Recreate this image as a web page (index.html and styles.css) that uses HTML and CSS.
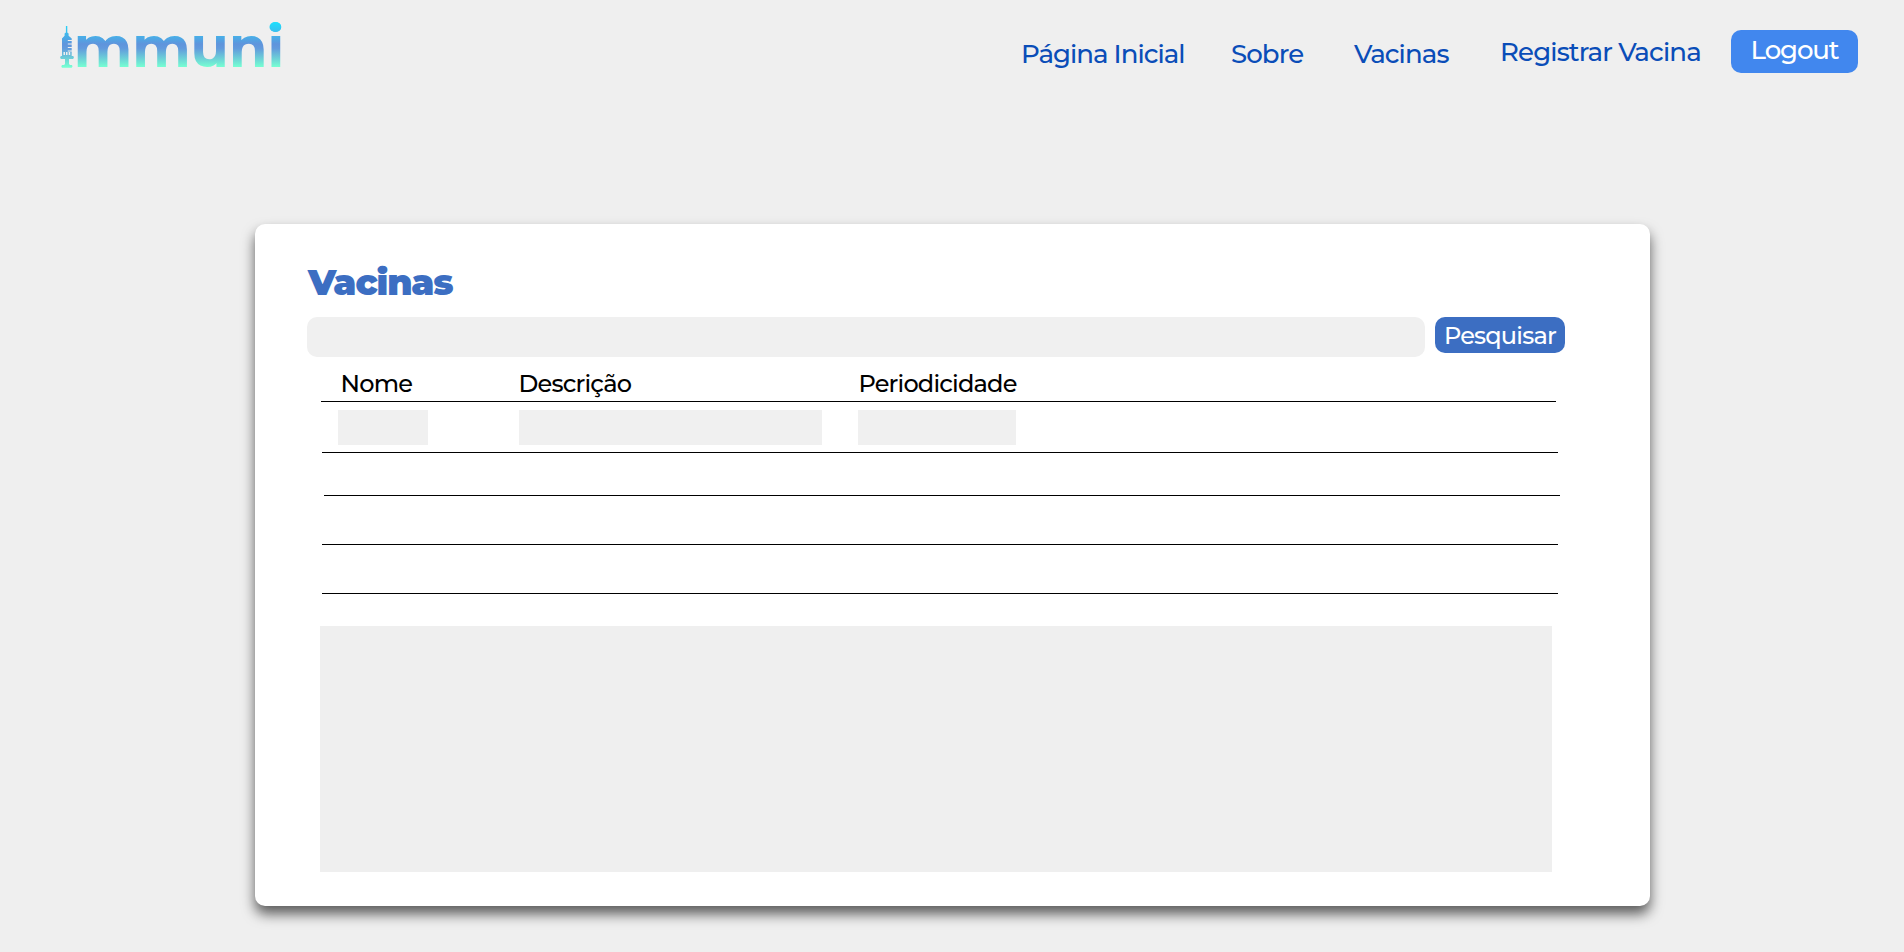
FILE: index.html
```html
<!DOCTYPE html>
<html lang="pt-BR">
<head>
<meta charset="utf-8">
<title>Immuni - Vacinas</title>
<link rel="stylesheet" href="styles.css">
</head>
<body>
<header class="topbar">
  <svg class="logo" viewBox="0 0 230 56" width="230" height="56" role="img" aria-label="Immuni">
    <defs>
      <linearGradient id="brand" gradientUnits="userSpaceOnUse" x1="0" y1="6" x2="0" y2="52">
        <stop offset="0" stop-color="#18e4ff"/>
        <stop offset="0.5" stop-color="#5f94dc"/>
        <stop offset="0.6" stop-color="#629bdd"/>
        <stop offset="1" stop-color="#76ffd2"/>
      </linearGradient>
    </defs>
    <g fill="url(#brand)">
      <path d="M15.900 11H17.300V17.500L18.600 18.500V20.800L21.700 23.500V25H17.800V26H21.700V28.500H17.800V29.500H21.700V32H17.800V33H21.700V35.500H17.800V36.500H21.700V41H23.200L23.800 42V43L23 44H19V49L20 50H22L22.500 51.500L21.700 52.700H12L11.300 51.500L12 50H14L15 49V44H11L10.200 43V42L11 41H12V23.500L14.600 20.800V18.500L15.900 17.500Z"/>
      <text class="logo-text" x="23.700" y="52" textLength="210.500" lengthAdjust="spacingAndGlyphs">mmuni</text>
      <ellipse cx="225.200" cy="12" rx="5.7" ry="5"/>
    </g>
    <path class="logo-window" d="M13.500 37h1.500v3h-1.500zM16 37h1.500v3H16zM18.700 37h1.500v3h-1.500z"/>
  </svg>
  <nav class="nav">
    <a class="nav-home">Página Inicial</a>
    <a class="nav-about">Sobre</a>
    <a class="nav-vaccines">Vacinas</a>
    <a class="nav-register">Registrar Vacina</a>
    <button class="logout"><span>Logout</span></button>
  </nav>
</header>
<main class="card">
  <h1 class="title">Vacinas</h1>
  <form class="search">
    <input class="search-input" type="text" aria-label="Pesquisar">
    <button class="search-button" type="button"><span>Pesquisar</span></button>
  </form>
  <section class="table">
    <div class="row head">
      <span class="c1">Nome</span><span class="c2">Descrição</span><span class="c3">Periodicidade</span>
    </div>
    <div class="row first">
      <i class="box b1"></i><i class="box b2"></i><i class="box b3"></i>
    </div>
    <div class="row second"></div>
    <div class="row third"></div>
    <div class="row third"></div>
  </section>
  <div class="panel"></div>
</main>
</body>
</html>
```
FILE: styles.css
```css
* { box-sizing: border-box; }
body {
  margin: 0;
  height: 952px;
  overflow: hidden;
  background: #efefef;
  font-family: Montserrat, Inter, sans-serif;
  font-weight: 500;
}
.topbar {
  display: flex;
  justify-content: space-between;
  height: 224px;
  padding: 15px 46px 0 50px;
}
.logo { overflow: visible; }
.logo-text { font: 700 57px Montserrat, Inter, sans-serif; }
.logo-window { fill: #efefef; }
.nav {
  display: flex;
  align-items: flex-start;
  padding-top: 15px;
  color: #0a4db8;
  font-size: 26px;
  letter-spacing: -.9px;
  line-height: 30px;
  white-space: nowrap;
}
.nav a { padding-top: 9px; }
.nav .nav-home { width: 210px; letter-spacing: -.97px; }
.nav-about { width: 123px; }
.nav-vaccines { width: 146px; }
.nav .nav-register { width: 231px; padding-top: 7px; letter-spacing: -.84px; }
button {
  border: 0;
  border-radius: 10px;
  color: #fff;
  font-family: inherit;
  font-weight: 500;
  white-space: nowrap;
}
.logout {
  width: 127px;
  height: 43px;
  padding: 0 0 4px;
  background: #4187ee;
  font-size: 26px;
  letter-spacing: -1.1px;
  line-height: 30px;
}
.card {
  width: 1395px;
  height: 682px;
  margin-left: 255px;
  padding: 36px 52px 0;
  border-radius: 10px;
  background: #fff;
  box-shadow: 0 8px 13px rgba(0, 0, 0, .62);
}
.title {
  height: 57px;
  margin: 0;
  padding-left: 1px;
  color: #3c6ec2;
  font-size: 36px;
  font-weight: 900;
  letter-spacing: -1.1px;
  line-height: 45px;
}
.search { display: flex; gap: 10px; height: 40px; }
.search-input {
  width: 1118px;
  border: 0;
  border-radius: 10px;
  background: #f0f0f0;
}
.search-button {
  width: 130px;
  height: 36px;
  padding: 1px 0 0;
  background: #3c6ec2;
  font-size: 24px;
  letter-spacing: -.8px;
  line-height: 30px;
}
.table { margin-left: 14px; }
.row {
  display: flex;
  width: 1236px;
  margin-left: 1px;
  border-bottom: 1px solid #000;
}
.head {
  width: 1235px;
  height: 45px;
  margin-left: 0;
  padding: 12px 0 0 19.5px;
  font-size: 24px;
  letter-spacing: -.8px;
  line-height: 30px;
}
.c1 { width: 178px; }
.c2 { width: 340px; }
.first { height: 51px; padding: 8px 0 0 16px; }
.box { height: 35px; background: #f0f0f0; }
.b1 { width: 90px; margin-right: 91px; }
.b2 { width: 303px; margin-right: 36px; }
.b3 { width: 158px; }
.second { height: 43px; margin-left: 3px; }
.third { height: 49px; }
.panel {
  width: 1232px;
  height: 246px;
  margin: 32px 0 0 13px;
  background: #efefef;
}
```
